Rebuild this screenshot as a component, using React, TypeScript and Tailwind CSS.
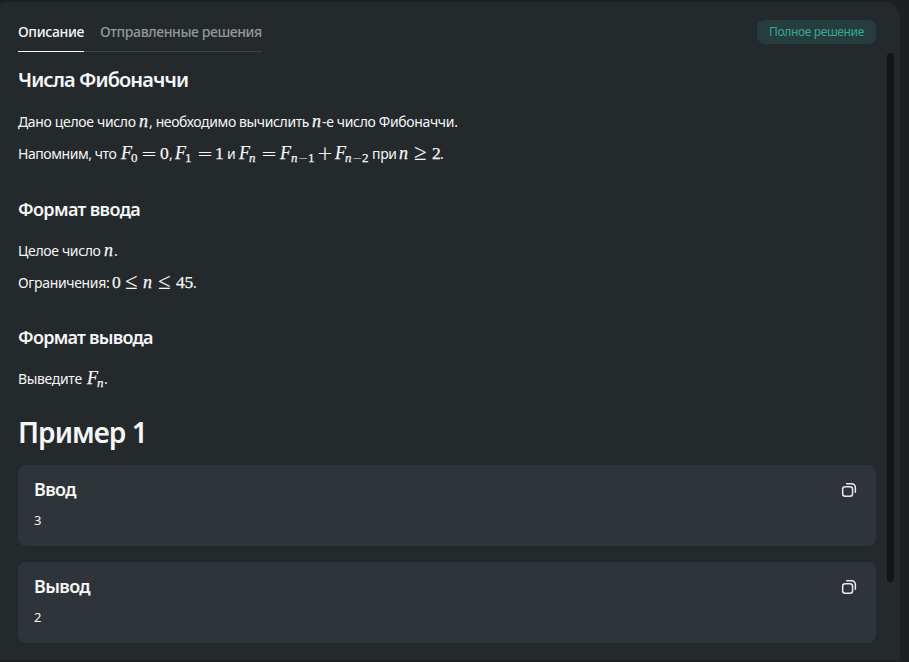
import type { ReactNode } from "react";

const serif = "font-['Liberation_Serif',serif] leading-5 [-webkit-text-stroke:0.25px_currentColor]";

// Inline run of text with a fixed advance, so formulas and words line up.
function W({ w, children, className = "" }: { w: string; children: ReactNode; className?: string }) {
  return <span className={`block shrink-0 whitespace-pre ${w} ${className}`}>{children}</span>;
}

function Var({ w, children }: { w: string; children: ReactNode }) {
  return <W w={w} className={`${serif} text-[18px] italic tracking-normal`}>{children}</W>;
}

function Num({ w, children }: { w: string; children: ReactNode }) {
  return <W w={w} className={`${serif} text-[17.5px]`}>{children}</W>;
}

function Op({ w, children }: { w: string; children: ReactNode }) {
  return <W w={w} className="relative top-px font-['DejaVu_Sans',sans-serif] text-[19px] font-extralight leading-5 [-webkit-text-stroke:0.2px_currentColor]">{children}</W>;
}

function Rel({ w, children }: { w: string; children: ReactNode }) {
  return <W w={w} className="relative top-px font-['Liberation_Serif',serif] text-[23px] leading-5">{children}</W>;
}

function Sub({ w, children }: { w: string; children: ReactNode }) {
  return <W w={w} className={`${serif} relative top-[3px] text-[13px]`}>{children}</W>;
}

function SubMinus() {
  return <W w="w-[9px]" className="relative -left-px top-[3px] font-['DejaVu_Sans',sans-serif] text-[12px] font-extralight leading-5 [-webkit-text-stroke:0.2px_currentColor]">−</W>;
}

function Line({ children, className = "" }: { children: ReactNode; className?: string }) {
  return <p className={`flex h-8 items-baseline pt-px text-[14px] leading-8 tracking-[-0.34px] ${className}`}>{children}</p>;
}

function CopyIcon() {
  return (
    <svg width="16" height="16" viewBox="0 0 16 16" fill="none" stroke="#e9eaec" strokeWidth="1.5" strokeLinecap="round">
      <rect x="1.65" y="4.65" width="9.9" height="9.7" rx="2.5" />
      <path d="M5.6 1.65H10.6A3.7 3.7 0 0 1 14.35 5.4V10.2" />
    </svg>
  );
}

function Card({ title, value }: { title: string; value: string }) {
  return (
    <section className="h-[81px] rounded-lg bg-[#2f333a] px-4 pt-[11px]">
      <div className="flex h-[27px] items-start justify-between pr-[3px]">
        <h3 className="text-[18px] font-semibold leading-[27px] tracking-[-0.65px]">{title}</h3>
        <button aria-label="Копировать" className="mt-[6px]"><CopyIcon /></button>
      </div>
      <div className="mt-[7px] text-[13px] leading-5">{value}</div>
    </section>
  );
}

export default function App() {
  return (
    <div className="h-[662px] w-[909px] overflow-hidden bg-[#1d2023] pt-[2px] font-['Noto_Sans',sans-serif] text-[#f5f6f7]">
      <main className="-ml-2 flex h-[658px] w-[908px] rounded-t-2xl bg-[#24292c] pl-[26px]">
        <div className="w-[858px]">
          <header className="flex h-[50px] items-start justify-between">
            <nav className="flex h-[50px] text-[14px] font-medium leading-5">
              <div className="w-[66px] whitespace-nowrap border-b border-white pt-5 tracking-[-0.35px]">Описание</div>
              <div className="w-[178px] whitespace-nowrap border-b border-[#3f4346] pl-4 pt-5 tracking-[-0.4px] text-[#94979a]">Отправленные решения</div>
            </nav>
            <div className="mt-[18px] flex h-6 w-[119px] items-center justify-center whitespace-nowrap rounded-lg bg-[#263d3d] text-[12px] tracking-[-0.35px] text-[#38a992]">Полное решение</div>
          </header>
          <h1 className="mt-[14px] h-7 text-[20px] font-semibold leading-7 tracking-[-0.9px]">Числа Фибоначчи</h1>
          <Line className="mt-[11px]">
            <W w="w-[121px]">Дано целое число </W><Var w="w-[10px]">n</Var>
            <W w="w-[163px]" className="tracking-[-0.38px]">, необходимо вычислить</W><Var w="w-[10px]">n</Var>
            <W w="w-[138px]">-е число Фибоначчи.</W>
          </Line>
          <Line>
            <W w="w-[103px]" className="tracking-[-0.45px]">Напомним, что</W><Var w="w-[10px]">F</Var><Sub w="w-[10px]">0</Sub>
            <Op w="w-[19px]">=</Op><Num w="w-[9px]">0</Num><W w="w-[6px]">,</W>
            <Var w="w-[10px]">F</Var><Sub w="w-[12px]">1</Sub><Op w="w-[18px]">=</Op><Num w="w-[12px]">1</Num><W w="w-[12px]">и</W>
            <Var w="w-[10px]">F</Var><Sub w="w-[12px]"><i>n</i></Sub><Op w="w-[19px]">=</Op>
            <Var w="w-[11px]">F</Var><Sub w="w-[8px]"><i>n</i></Sub><SubMinus /><Sub w="w-[9px]">1</Sub><Op w="w-[18px]">+</Op>
            <Var w="w-[10px]">F</Var><Sub w="w-[8px]"><i>n</i></Sub><SubMinus /><Sub w="w-[10px]">2</Sub><W w="w-[27px]">при</W>
            <Var w="w-[15px]">n</Var><Rel w="w-[18px]">≥</Rel><Num w="w-[8px]">2</Num><W w="w-[4px]">.</W>
          </Line>
          <h2 className="mt-6 h-8 text-[18px] font-semibold leading-8 tracking-[-0.65px]">Формат ввода</h2>
          <Line className="mt-[9px]"><W w="w-[86px]">Целое число </W><Var w="w-[10px]">n</Var><W w="w-[4px]">.</W></Line>
          <Line>
            <W w="w-[94px]">Ограничения: </W><Num w="w-[13px]">0</Num><Rel w="w-[18px]">≤</Rel>
            <Var w="w-[15px]">n</Var><Rel w="w-[18px]">≤</Rel><Num w="w-[17px]">45</Num><W w="w-[4px]">.</W>
          </Line>
          <h2 className="mt-[23px] h-8 text-[18px] font-semibold leading-8 tracking-[-0.75px]">Формат вывода</h2>
          <Line className="mt-[9px]"><W w="w-[69px]">Выведите </W><Var w="w-[10px]">F</Var><Sub w="w-[7px]"><i>n</i></Sub><W w="w-[4px]">.</W></Line>
          <h2 className="mb-[13px] mt-[18px] h-10 text-[28px] font-semibold leading-10 tracking-[-0.95px]">Пример 1</h2>
          <div className="flex flex-col gap-4">
            <Card title="Ввод" value="3" />
            <Card title="Вывод" value="2" />
          </div>
        </div>
        <div className="ml-[11px] mt-[51px] h-[529px] w-[7px] rounded-full bg-[#131518]" />
      </main>
    </div>
  );
}
